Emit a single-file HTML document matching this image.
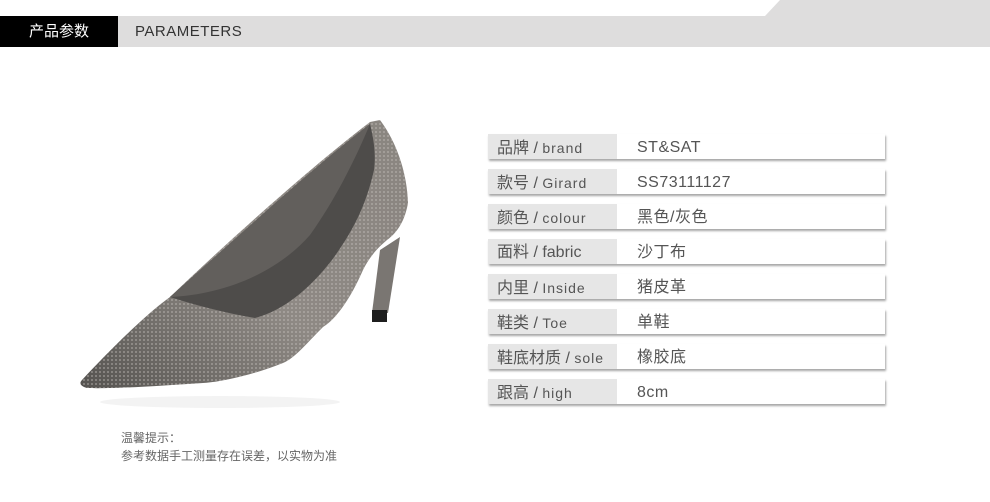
<!DOCTYPE html><html><head><meta charset="utf-8"><style>
body{margin:0;width:990px;height:502px;background:#fff;position:relative;overflow:hidden;font-family:"Liberation Sans","Noto Sans CJK SC",sans-serif}
.hd{position:absolute;top:16px;height:31px;line-height:31px}
.row{position:absolute;left:488px;width:397px;height:25px;background:#fff;box-shadow:1px 2px 2px rgba(0,0,0,.35);color:#555;font-size:16px;line-height:28px}
.row .l{position:absolute;left:0;top:0;width:129px;height:25px;background:#e6e6e6;padding-left:9px;box-sizing:border-box;white-space:nowrap}
.row .l small{font-size:14px;letter-spacing:1px}
.row .v{position:absolute;left:149px;top:0;letter-spacing:.5px}
</style></head><body>
<svg style="position:absolute;left:0;top:0" width="990" height="50"><polygon points="765,16 780,0 990,0 990,16" fill="#dedddd"/></svg>
<div class="hd" style="left:0;width:118px;background:#000;color:#fff;font-size:15px;text-align:center">产品参数</div>
<div class="hd" style="left:118px;width:872px;background:#dedddd;color:#333;font-size:15px;padding-left:17px;box-sizing:border-box;letter-spacing:.5px">PARAMETERS</div>
<svg style="position:absolute;left:70px;top:110px" width="340" height="310" viewBox="0 0 340 310">
<defs><linearGradient id="g" x1="0" y1="1" x2="1" y2="0"><stop offset="0" stop-color="#555350"/><stop offset=".45" stop-color="#8e8984"/><stop offset="1" stop-color="#8a8580"/></linearGradient>
<pattern id="d" width="4" height="4" patternUnits="userSpaceOnUse"><circle cx="2" cy="2" r="1" fill="#c8c4bf" opacity=".5"/></pattern></defs>
<ellipse cx="150" cy="292" rx="120" ry="6" fill="#f3f3f3"/>
<path d="M302 203 L310 140 L330 127 L318 203Z" fill="#7a7672"/>
<rect x="302" y="200" width="15" height="12" fill="#1e1e1e"/>
<path d="M12 270 C40 240 75 205 100 187 C170 120 250 50 300 12 L310 10 C325 30 337 60 338 93 C335 110 328 122 317 130 C305 140 298 150 293 160 C280 190 265 210 253 217 C235 235 225 248 213 253 C180 266 150 272 133 273 C90 276 40 279 17 278 C10 276 9 273 12 270Z" fill="url(#g)"/>
<path d="M12 270 C40 240 75 205 100 187 C170 120 250 50 300 12 L310 10 C325 30 337 60 338 93 C335 110 328 122 317 130 C305 140 298 150 293 160 C280 190 265 210 253 217 C235 235 225 248 213 253 C180 266 150 272 133 273 C90 276 40 279 17 278 C10 276 9 273 12 270Z" fill="url(#d)"/>
<path d="M100 187 C170 125 240 60 300 14 C304 30 306 45 304 60 C295 100 280 125 262 150 C240 178 215 200 185 208 C155 203 125 195 100 187Z" fill="#4e4c4a"/>
<path d="M100 187 C170 125 240 60 300 14 C285 50 265 90 240 125 C205 165 150 185 100 187Z" fill="#625f5c"/>
</svg>
<div class="row" style="top:134px"><div class="l">品牌 / <small>brand</small></div><div class="v">ST&amp;SAT</div></div>
<div class="row" style="top:169px"><div class="l">款号 / <small>Girard</small></div><div class="v">SS73111127</div></div>
<div class="row" style="top:204px"><div class="l">颜色 / <small>colour</small></div><div class="v">黑色/灰色</div></div>
<div class="row" style="top:239px"><div class="l">面料 / fabric</div><div class="v">沙丁布</div></div>
<div class="row" style="top:274px"><div class="l">内里 / <small>Inside</small></div><div class="v">猪皮革</div></div>
<div class="row" style="top:309px"><div class="l">鞋类 / <small>Toe</small></div><div class="v">单鞋</div></div>
<div class="row" style="top:344px"><div class="l">鞋底材质 / <small>sole</small></div><div class="v">橡胶底</div></div>
<div class="row" style="top:379px"><div class="l">跟高 / <small>high</small></div><div class="v">8cm</div></div>
<div style="position:absolute;left:121px;top:429px;font-size:12px;color:#666;line-height:18px">温馨提示：<br>参考数据手工测量存在误差，以实物为准</div>
</body></html>
